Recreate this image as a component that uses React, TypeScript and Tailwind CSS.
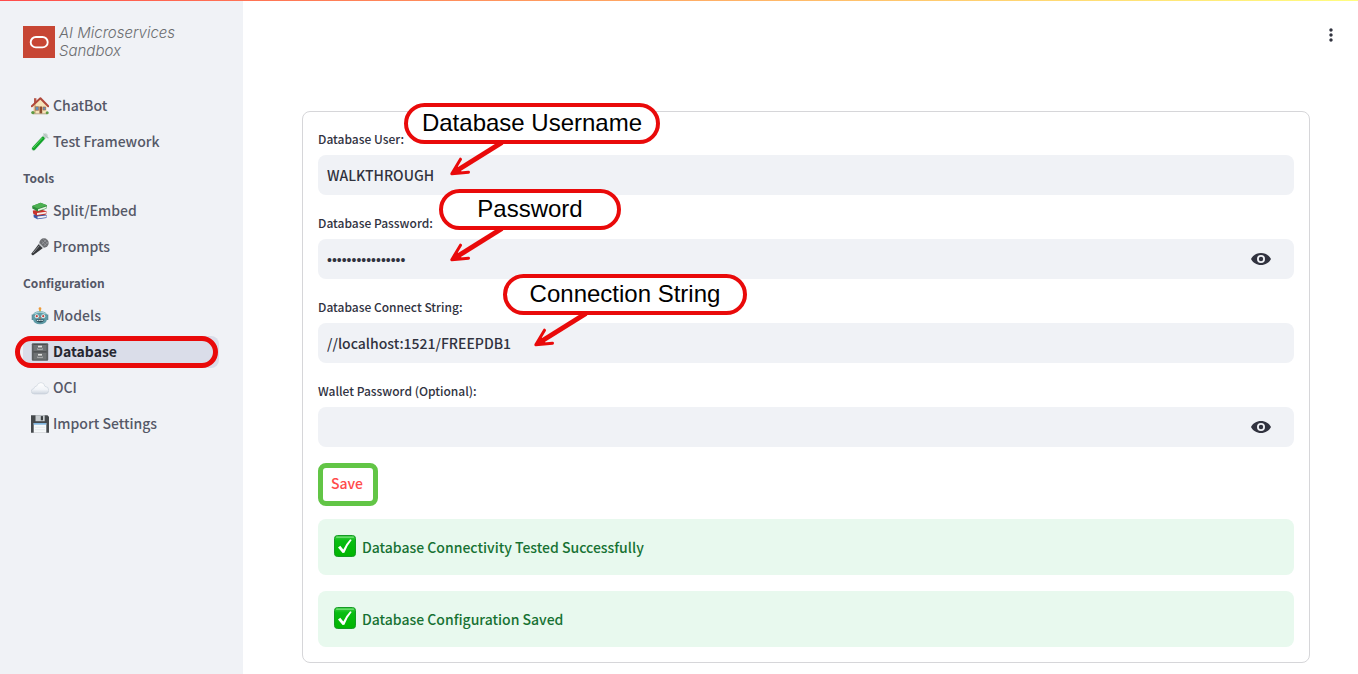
import type { ReactNode } from 'react';
import { MdMoreVert } from 'react-icons/md';

const emoji = 'size-[18px] shrink-0';

function HouseIcon() {
  return (
    <svg viewBox="0 0 18 18" className={emoji} aria-hidden="true">
      <path d="M3 1.200h2.400v5H3z" fill="#b5574a" />
      <path d="M2.700 8.500 9.600 2.200l6 6.300v8.300H2.700z" fill="#f6e3b8" />
      <path d="M2.700 8.500 5 7v9.800H2.700z" fill="#dcbd8c" />
      <path d="m.8 9.200 8.600-7.900 7.800 8" fill="none" stroke="#b0483a" strokeWidth="2" strokeLinejoin="round" strokeLinecap="round" />
      <path d="M4.400 9.700h3.200v3.600H4.400z" fill="#5b93c4" stroke="#a56a48" strokeWidth=".700" />
      <path d="M12 10h2.600v3H12z" fill="#5b93c4" stroke="#a56a48" strokeWidth=".700" />
      <path d="M8.500 9.500h2.700v7.300H8.500z" fill="#8b4b2d" />
      <path d="M2 16.300h14v1H2z" fill="#b9a58a" />
      <circle cx="1.900" cy="15.600" r="1.700" fill="#5f9a44" />
      <circle cx="16.200" cy="15.800" r="1.500" fill="#5f9a44" />
    </svg>
  );
}

function TubeIcon() {
  return (
    <svg viewBox="0 0 18 18" className={emoji} aria-hidden="true">
      <path d="M14.6 2.6 2.6 15.6" stroke="#c5d3cd" strokeWidth="4.2" strokeLinecap="round" />
      <path d="M12 5.4 2.7 15.5" stroke="#12a529" strokeWidth="3.4" strokeLinecap="round" />
      <path d="M11.2 5.2 2.4 14.8" stroke="#5ed765" strokeWidth="1" strokeLinecap="round" />
      <path d="m12.8.9 4.2 4" stroke="#b4c2be" strokeWidth="1.3" strokeLinecap="round" />
    </svg>
  );
}

function BooksIcon() {
  return (
    <svg viewBox="0 0 18 18" className={emoji} aria-hidden="true">
      <path d="m2.5 12.6 10-.8 3.5 1.6-.6 2.6-9 1.2-3.7-2z" fill="#3a57a5" />
      <path d="m6.5 14.6 9-1v1.600l-9 1.200z" fill="#eef0f4" />
      <path d="m1.800 8.500 9-.8 4.700 1.600-.3 3.200-9.500 1.300-3.600-2.200z" fill="#c8322c" />
      <path d="m6 11 9-1.300v1.900l-9 1.400z" fill="#f7eee8" />
      <path d="m1.200 4 8.400-3.200L16 3.300l-.7 3.500-8.500 2.800L1.300 6.400z" fill="#2f8c3b" />
      <path d="m1.200 4 8.400-3.200L16 3.300 7 6.500z" fill="#4db052" />
      <path d="m7 7.200 8.200-2.700v1.700L7 9z" fill="#e9f1e4" />
    </svg>
  );
}

function MicIcon() {
  return (
    <svg viewBox="0 0 18 18" className={emoji} aria-hidden="true">
      <path d="M8.200 5.600.500 15.600q-.3 1.900 1.700 1.700L12.300 9.800z" fill="#36383b" />
      <path d="M8.400 7.600 2 15.200" stroke="#8c8f93" strokeWidth="1" />
      <circle cx="13" cy="5" r="4.700" fill="#6c6e72" />
      <path d="m8 5.400 4.500 4.600" stroke="#c4c7cb" strokeWidth="1.500" />
      <path d="m10.500 3 5 4.800M12.300 1.300l4.500 4.200M10.800 6.200l4.800-4.800M12.800 8l4-4" stroke="#a6a8ad" strokeWidth=".6" />
    </svg>
  );
}

function RobotIcon() {
  return (
    <svg viewBox="0 0 18 18" className={emoji} aria-hidden="true">
      <path d="M9 2.500v3" stroke="#e3b341" strokeWidth="2" />
      <circle cx="9" cy="1.700" r="1.400" fill="#ec9b39" />
      <path d="M.700 7.500h2.500v5.500H.700zM14.800 7.500h2.500v5.500h-2.500z" fill="#5d8f9c" />
      <path d="M2 8q.5-3.800 7-3.800T16 8v4.500q-1 4.800-7 4.800t-7-4.800z" fill="#5f9ba6" />
      <path d="M3.400 7Q5 5.200 9 5.200T14.600 7" stroke="#a3d0d5" strokeWidth="1.200" fill="none" />
      <circle cx="5.800" cy="9.200" r="2" fill="#e9f4f3" />
      <circle cx="12.200" cy="9.200" r="2" fill="#e9f4f3" />
      <circle cx="5.800" cy="9.200" r="1.100" fill="#c0433d" />
      <circle cx="12.200" cy="9.200" r="1.100" fill="#c0433d" />
      <path d="m9 9.800-1 1.900h2z" fill="#d8573e" />
      <path d="M4.600 12.600h8.800q-.8 2.900-4.400 2.900t-4.400-2.900z" fill="#2d4f5a" />
      <path d="M5.800 13.500h6.400" stroke="#d8e8e8" strokeWidth="1" strokeDasharray="1.300 .5" />
    </svg>
  );
}

function CabinetIcon() {
  return (
    <svg viewBox="0 0 18 18" className={emoji} aria-hidden="true">
      <rect x=".800" y=".200" width="16.400" height="17.600" rx="1" fill="#5b5e60" />
      <path d="M2.600 1.600h12.800v6.600H2.600zM2.600 9.800h12.800v6.600H2.600z" fill="#6f7274" />
      <path d="M2.600 8.800h12.800M2.600 1.500h12.800" stroke="#414345" strokeWidth=".700" />
      <rect x="7" y="2.700" width="4" height="1.700" fill="#e0e0de" />
      <path d="M6.500 5.400v1h5v-1" stroke="#c4c6c6" strokeWidth=".700" fill="none" />
      <rect x="7" y="10.900" width="4" height="1.700" fill="#e0e0de" />
      <path d="M6.500 13.600v1h5v-1" stroke="#c4c6c6" strokeWidth=".700" fill="none" />
    </svg>
  );
}

function CloudIcon() {
  return (
    <svg viewBox="0 0 18 18" className={emoji} aria-hidden="true">
      <defs>
        <linearGradient id="cloud-fill" x1="0" y1="0" x2="0" y2="1">
          <stop offset="0" stopColor="#ffffff" />
          <stop offset=".6" stopColor="#f1f4f8" />
          <stop offset="1" stopColor="#ccd4de" />
        </linearGradient>
      </defs>
      <path
        d="M3.500 15Q.2 14.800.2 12.300q0-2.300 2.700-2.700.2-2.400 2.700-2.500Q6.900 3.600 10 3.600q3.300 0 3.900 3.700 3.900.4 3.900 4-.2 3.600-3.800 3.700z"
        fill="url(#cloud-fill)"
        stroke="#c6ced8"
        strokeWidth=".600"
      />
    </svg>
  );
}

function FloppyIcon() {
  return (
    <svg viewBox="0 0 18 18" className={emoji} aria-hidden="true">
      <path d="M0 .200h16.500l1.500 1.500v16.100H0z" fill="#45494c" />
      <path d="M4.500.200h9.200v6H4.500z" fill="#c9ced1" />
      <path d="M9.800 1.100h2.200v4.200H9.800z" fill="#3c4043" />
      <path d="M2.700 8h12.600v9.800H2.700z" fill="#f5f8fa" />
      <path d="M2.700 8h12.600v1.700H2.700z" fill="#7fb5df" />
      <path d="M4 12.300h10M4 14.700h10" stroke="#dde3e7" strokeWidth=".700" />
    </svg>
  );
}

function CheckIcon() {
  return (
    <svg viewBox="0 0 22 22" className="size-[22px] shrink-0" aria-hidden="true">
      <defs>
        <linearGradient id="check-fill" x1="0" y1="0" x2="0" y2="1">
          <stop offset="0" stopColor="#3fd044" />
          <stop offset=".25" stopColor="#08bd12" />
          <stop offset="1" stopColor="#00b500" />
        </linearGradient>
      </defs>
      <rect x=".5" y=".5" width="21" height="21" rx="3" fill="url(#check-fill)" stroke="#159a25" />
      <path d="M2.500 2.200h17" stroke="#83e486" strokeWidth="1" strokeLinecap="round" />
      <path d="m4 12.400 2.300-1.600 3 3.700Q12 8.700 16.200 4.300l1.500.7q-4.600 5.500-7.300 12.700l-1.800.2z" fill="#fff" />
    </svg>
  );
}

function EyeIcon() {
  return (
    <svg viewBox="0 0 20 12" className="h-3 w-5" aria-hidden="true">
      <path
        fillRule="evenodd"
        fill="#31333f"
        d="M10 0C5.500 0 1.800 2.400 0 6c1.800 3.600 5.500 6 10 6s8.200-2.400 10-6c-1.800-3.600-5.500-6-10-6Zm0 10a4 4 0 1 1 0-8 4 4 0 0 1 0 8Z"
      />
      <circle cx="10" cy="6" r="2.200" fill="#31333f" />
    </svg>
  );
}

function NavItem({ icon, label, active = false }: { icon: ReactNode; label: string; active?: boolean }) {
  return (
    <li>
      <a
        href="#"
        aria-current={active ? 'page' : undefined}
        className={
          active
            ? 'relative flex h-8 items-center gap-1 rounded-lg bg-[#dadde9] px-2 text-[14px] font-bold text-[#262730]'
            : 'flex h-8 items-center gap-1 px-2 text-[14px] text-[#555867]'
        }
      >
        {icon}
        <span className="pb-[2px]">{label}</span>
        {active && <span className="absolute inset-y-0 -left-2 right-px rounded-full border-5 border-[#e90a0a]" />}
      </a>
    </li>
  );
}

function NavHeading({ children }: { children: string }) {
  return <h2 className="flex h-[37px] items-center pt-1 pb-[2px] text-[12px] font-bold text-[#555867]">{children}</h2>;
}

function Field({ id, label, value, secret = false }: { id: string; label: string; value: string; secret?: boolean }) {
  return (
    <div className="flex flex-col gap-[5px]">
      <label htmlFor={id} className="text-[12px] leading-[23px]">
        {label}
      </label>
      <div className="flex h-10 items-center rounded-lg bg-[#f0f2f6] pr-[23px] pl-[9px]">
        <input
          id={id}
          type={secret ? 'password' : 'text'}
          defaultValue={value}
          className={
            secret
              ? "min-w-0 flex-1 bg-transparent pt-[2px] font-['Liberation_Sans',sans-serif] text-[14px] outline-none"
              : 'min-w-0 flex-1 bg-transparent text-[14px] outline-none'
          }
        />
        {secret && (
          <button type="button" aria-label="Show password text">
            <EyeIcon />
          </button>
        )}
      </div>
    </div>
  );
}

function Alert({ children }: { children: string }) {
  return (
    <div role="status" className="flex h-14 items-start gap-[6px] rounded-lg bg-[#e8f9ee] px-4 pt-4 text-[14px] leading-6 text-[#177233]">
      <CheckIcon />
      <p>{children}</p>
    </div>
  );
}

function Callout({ place, pill, arrow, children }: { place: string; pill: string; arrow: string; children: string }) {
  return (
    <div className={`pointer-events-none absolute ${place}`}>
      <div
        className={`flex h-[41px] items-center justify-center rounded-full border-4 border-[#e90a0a] bg-white pb-[2px] font-['Liberation_Sans',sans-serif] text-[24px] text-black ${pill}`}
      >
        {children}
      </div>
      <svg viewBox="0 0 60 36" className={`absolute top-[38px] h-9 w-[60px] ${arrow}`} aria-hidden="true">
        <path d="M53 1.500 8 29.500" stroke="#e90a0a" strokeWidth="5" fill="none" />
        <path
          d="M11.500 18.200 2.800 32.700 19.500 31.200"
          fill="none"
          stroke="#e90a0a"
          strokeWidth="3"
          strokeLinejoin="round"
          strokeLinecap="round"
        />
        <path d="M2.800 32.700 8 24.500 13 31.500Z" fill="#e90a0a" />
      </svg>
    </div>
  );
}

export default function App() {
  return (
    <div className="flex min-h-screen flex-col bg-white font-['Noto_Sans_CJK_SC',sans-serif] font-medium text-[#31333f]">
      <div className="h-px bg-linear-to-r from-[#ff4b4b] to-[#fffd80]" />
      <div className="flex flex-1">
        <aside className="w-[243px] shrink-0 bg-[#f0f2f6] pt-[25px] pr-6 pl-[23px]">
          <div className="flex h-8 items-center gap-1">
            <svg viewBox="0 0 32 32" className="size-8 shrink-0" aria-hidden="true">
              <path d="M0 0h32v32H0z" fill="#c74634" />
              <rect x="7.700" y="11" width="17" height="10.400" rx="5.200" fill="none" stroke="#fff" strokeWidth="1.900" />
            </svg>
            <p className="font-['Inter',sans-serif] text-[15px] leading-[18px] font-light whitespace-nowrap text-[#6b6d70] italic">
              AI Microservices
              <br />
              Sandbox
            </p>
          </div>
          <nav className="pt-8">
            <ul className="flex flex-col gap-1">
              <NavItem icon={<HouseIcon />} label="ChatBot" />
              <NavItem icon={<TubeIcon />} label="Test Framework" />
            </ul>
            <NavHeading>Tools</NavHeading>
            <ul className="flex flex-col gap-1">
              <NavItem icon={<BooksIcon />} label="Split/Embed" />
              <NavItem icon={<MicIcon />} label="Prompts" />
            </ul>
            <NavHeading>Configuration</NavHeading>
            <ul className="flex flex-col gap-1">
              <NavItem icon={<RobotIcon />} label="Models" />
              <NavItem icon={<CabinetIcon />} label="Database" active />
              <NavItem icon={<CloudIcon />} label="OCI" />
              <NavItem icon={<FloppyIcon />} label="Import Settings" />
            </ul>
          </nav>
        </aside>
        <main className="min-w-0 flex-1 pb-[11px]">
          <header className="flex h-[68px] items-center justify-end px-[17px]">
            <button type="button" aria-label="Main menu">
              <MdMoreVert className="size-5" />
            </button>
          </header>
          <div className="pt-[42px] pr-12 pl-[59px]">
            <form className="relative flex flex-col gap-4 rounded-lg border border-[#d6d6d9] p-[15px]">
              <Field id="user" label="Database User:" value="WALKTHROUGH" />
              <Field id="password" label="Database Password:" value="0000000000000000" secret />
              <Field id="connect" label="Database Connect String:" value="//localhost:1521/FREEPDB1" />
              <Field id="wallet" label="Wallet Password (Optional):" value="" secret />
              <div className="h-10">
                <button
                  type="button"
                  className="flex h-[43px] w-[60px] items-center justify-center rounded-lg border-5 border-[#62c546] bg-white pr-[2px] pb-[2px] text-[14px] text-[#ff4b4b]"
                >
                  Save
                </button>
              </div>
              <Alert>Database Connectivity Tested Successfully</Alert>
              <Alert>Database Configuration Saved</Alert>
              <Callout place="left-[101px] -top-[9px]" pill="w-[256px]" arrow="left-[45px]">
                Database Username
              </Callout>
              <Callout place="left-[136px] top-[77px]" pill="w-[182px]" arrow="left-[10px]">
                Password
              </Callout>
              <Callout place="left-[200px] top-[162px]" pill="w-[244px]" arrow="left-[30px]">
                Connection String
              </Callout>
            </form>
          </div>
        </main>
      </div>
    </div>
  );
}
